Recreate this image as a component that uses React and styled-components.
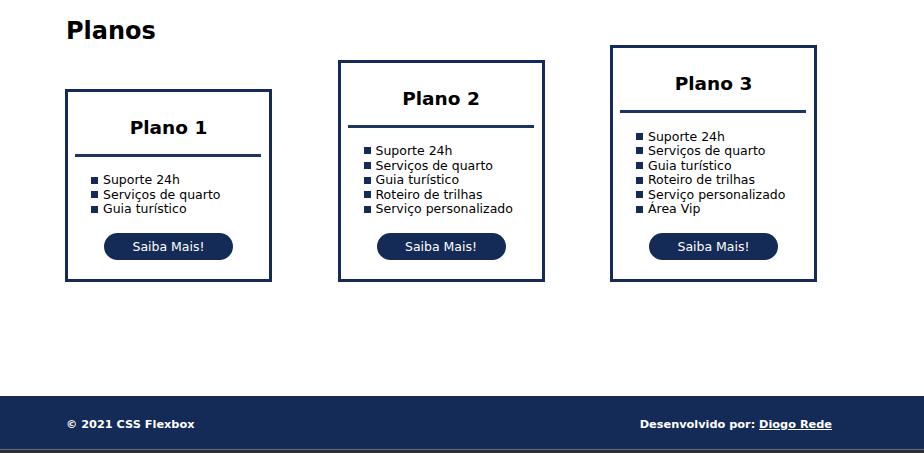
import styled, { createGlobalStyle } from "styled-components";

const navy = "#142a57";

const GlobalStyle = createGlobalStyle`
  * {
    box-sizing: border-box;
  }
  body {
    margin: 0;
    background: #fff;
    color: #000;
    font-family: "DejaVu Sans", Verdana, sans-serif;
  }
`;

const Page = styled.div`
  display: flex;
  flex-direction: column;
  min-height: 100vh;
`;

const Main = styled.main`
  flex: 1;
  padding: 18px 0 0 65px;
`;

const Title = styled.h1`
  font-size: 24px;
  font-weight: bold;
  line-height: 27px;
  margin: 0 0 0 1px;
`;

const Plans = styled.div`
  align-items: flex-end;
  display: flex;
  gap: 65.5px;
`;

const Card = styled.section`
  border: 3px solid ${navy};
  display: flex;
  flex-direction: column;
  padding: 25px 0 19px;
  width: 207px;
`;

const PlanName = styled.h2`
  font-size: 18.5px;
  font-weight: bold;
  line-height: 21.5px;
  margin: 0;
  text-align: center;
`;

const Divider = styled.hr`
  border: none;
  border-top: 3px solid #1d3461;
  margin: 15.5px 8px 0 7px;
`;

const Features = styled.ul`
  font-size: 12.5px;
  line-height: 14.6px;
  list-style: none;
  margin: 16.5px 0 0;
  padding: 0 0 0 23px;
`;

const Feature = styled.li`
  align-items: center;
  display: flex;
  &::before {
    background: ${navy};
    content: "";
    height: 7px;
    margin: 0 5px 1px 0;
    width: 7px;
  }
`;

const Button = styled.a`
  align-self: center;
  background: ${navy};
  border-radius: 14px;
  color: #fff;
  cursor: pointer;
  font-size: 12.5px;
  height: 27px;
  line-height: 27px;
  margin-top: 15.5px;
  text-align: center;
  width: 129px;
`;

const Footer = styled.footer`
  align-items: center;
  background: ${navy};
  border-bottom: 1px solid #5b6b8c;
  box-shadow: 0 3px 0 #2e2e2e;
  color: #fff;
  display: flex;
  font-size: 11.3px;
  font-weight: bold;
  height: 54px;
  justify-content: space-between;
  margin-bottom: 3px;
  padding: 3px 92px 0 66px;
  a {
    color: #fff;
    text-decoration: underline;
  }
`;

const plans = [
  { name: "Plano 1", items: ["Suporte 24h", "Serviços de quarto", "Guia turístico"] },
  {
    name: "Plano 2",
    items: ["Suporte 24h", "Serviços de quarto", "Guia turístico", "Roteiro de trilhas", "Serviço personalizado"],
  },
  {
    name: "Plano 3",
    items: [
      "Suporte 24h",
      "Serviços de quarto",
      "Guia turístico",
      "Roteiro de trilhas",
      "Serviço personalizado",
      "Área Vip",
    ],
  },
];

const App = () => (
  <Page>
    <GlobalStyle />
    <Main>
      <Title>Planos</Title>
      <Plans>
        {plans.map(p => (
          <Card key={p.name}>
            <PlanName>{p.name}</PlanName>
            <Divider />
            <Features>
              {p.items.map(item => (
                <Feature key={item}>{item}</Feature>
              ))}
            </Features>
            <Button>Saiba Mais!</Button>
          </Card>
        ))}
      </Plans>
    </Main>
    <Footer>
      <span>© 2021 CSS Flexbox</span>
      <span>
        Desenvolvido por: <a>Diogo Rede</a>
      </span>
    </Footer>
  </Page>
);

export default App;
